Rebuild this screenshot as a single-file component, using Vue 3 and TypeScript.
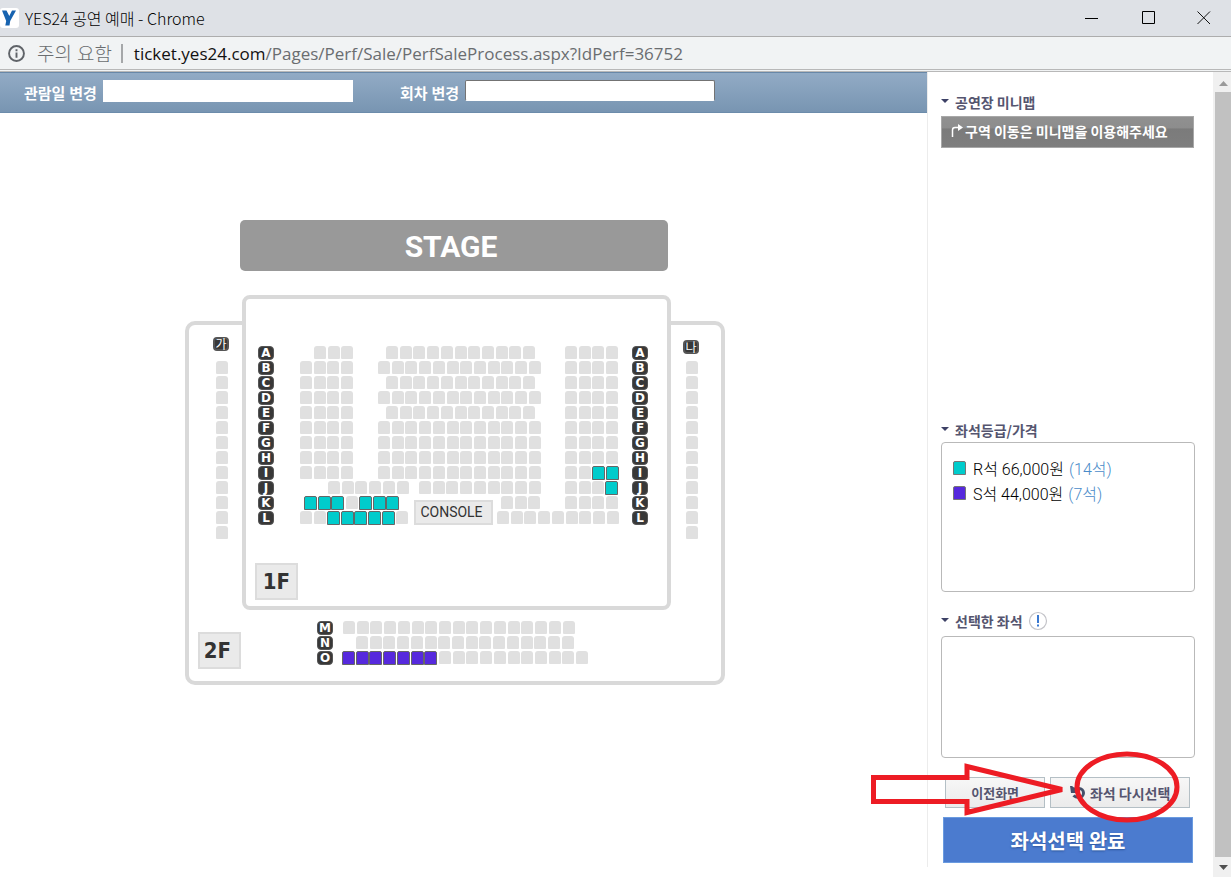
<script setup lang="ts">
import { ref } from 'vue'

type Grade = 'R' | 'S' | null

interface Seat {
  id: string
  x: number
  y: number
  grade: Grade
}

interface Marker {
  text: string
  x: number
  y: number
}

const SEAT_PITCH = 13.72
const ROW_PITCH = 15
const ORIGIN_X = 185
const ORIGIN_Y = 220

const seats: Seat[] = []
const markers: Marker[] = []

function addRun(row: string, x: number, y: number, count: number, grade: Grade = null) {
  for (let i = 0; i < count; i++) {
    const left = Math.round(x + i * SEAT_PITCH) - ORIGIN_X
    seats.push({ id: `${row}-${left}`, x: left, y: y - ORIGIN_Y, grade })
  }
}

'ABCDEFGHIJKL'.split('').forEach((row, i) => {
  const y = 346 + i * ROW_PITCH
  markers.push({ text: row, x: 258 - ORIGIN_X, y: y - ORIGIN_Y })
  markers.push({ text: row, x: 632 - ORIGIN_X, y: y - ORIGIN_Y })

  if (row === 'A') addRun(row, 314, y, 3)
  else if (i <= 8) addRun(row, 300, y, 4)

  if (row === 'A' || row === 'C' || row === 'E') addRun(row, 386, y, 11)
  else if (i <= 8) addRun(row, 378, y, 12)

  if (i <= 7 || row === 'K') addRun(row, 565, y, 4)
})

addRun('I', 565, 466, 2)
addRun('I', 592, 466, 2, 'R')
addRun('J', 328, 481, 6)
addRun('J', 419, 481, 9)
addRun('J', 565, 481, 3)
addRun('J', 605, 481, 1, 'R')
addRun('K', 304, 496, 3, 'R')
addRun('K', 346, 496, 1)
addRun('K', 359, 496, 3, 'R')
addRun('K', 501, 496, 3)
addRun('L', 300, 511, 2)
addRun('L', 327, 511, 5, 'R')
addRun('L', 396, 511, 1)
addRun('L', 497, 511, 9)

for (let i = 0; i < 12; i++) {
  addRun(`left${i}`, 216, 361 + i * ROW_PITCH, 1)
  addRun(`right${i}`, 686, 361 + i * ROW_PITCH, 1)
}

'MNO'.split('').forEach((row, i) => {
  markers.push({ text: row, x: 317 - ORIGIN_X, y: 621 + i * ROW_PITCH - ORIGIN_Y })
})
addRun('M', 343, 621, 17)
addRun('N', 356, 636, 16)
addRun('O', 342, 651, 7, 'S')
addRun('O', 439, 651, 11)

const wings: Marker[] = [
  { text: '가', x: 213 - ORIGIN_X, y: 337 - ORIGIN_Y },
  { text: '나', x: 683 - ORIGIN_X, y: 340 - ORIGIN_Y },
]

const prices = [
  { grade: 'R', price: '66,000', left: 14 },
  { grade: 'S', price: '44,000', left: 7 },
]

const picked = ref<string[]>([])

function toggle(id: string) {
  picked.value = picked.value.includes(id)
    ? picked.value.filter((p) => p !== id)
    : [...picked.value, id]
}
</script>

<template>
  <div class="window">
    <header class="titlebar">
      <svg class="favicon" viewBox="0 0 19 20" aria-hidden="true">
        <rect width="19" height="20" rx="3" fill="#fff" />
        <path d="M2 2.500h4.500l2.800 5.500 2.700-5.500h4l-5.800 10.500-.7 4.500H5.300l.9-4.500z" fill="#1763b0" />
      </svg>
      <h1 class="title">YES24 공연 예매 - Chrome</h1>
      <div class="controls">
        <button type="button" aria-label="최소화">
          <svg viewBox="0 0 14 14"><path d="M0 7.500h13" stroke="#000" fill="none" /></svg>
        </button>
        <button type="button" aria-label="최대화">
          <svg viewBox="0 0 14 14"><path d="M.5 .5h12v12H.5z" stroke="#000" fill="none" /></svg>
        </button>
        <button type="button" aria-label="닫기">
          <svg viewBox="0 0 14 14"><path d="M.5 .5l12.500 12.500M13 .5L.5 13" stroke="#111" fill="none" /></svg>
        </button>
      </div>
    </header>

    <div class="address">
      <svg class="info" viewBox="0 0 16 16" aria-hidden="true">
        <circle cx="8" cy="8" r="7" fill="none" stroke="#5f6368" stroke-width="1.800" />
        <path d="M8 7v5M8 4v1.800" stroke="#5f6368" stroke-width="1.800" />
      </svg>
      <span class="warn">주의 요함</span>
      <span class="divider"></span>
      <span class="url"><b>ticket.yes24.com</b>/Pages/Perf/Sale/PerfSaleProcess.aspx?IdPerf=36752</span>
    </div>

    <div class="page">
      <main class="booking">
        <form class="filters">
          <div class="filter">
            <label for="date">관람일 변경</label>
            <select id="date"><option></option></select>
          </div>
          <div class="filter">
            <label for="round">회차 변경</label>
            <select id="round" class="outlined"><option></option></select>
          </div>
        </form>

        <div class="hall">
          <div class="map">
            <div class="stage">STAGE</div>
            <div class="floor second"></div>
            <div class="floor first"></div>
            <span
              v-for="(m, i) in markers"
              :key="i"
              class="marker"
              :style="{ left: m.x + 'px', top: m.y + 'px' }"
            >{{ m.text }}</span>
            <span
              v-for="w in wings"
              :key="w.text"
              class="marker wing"
              :style="{ left: w.x + 'px', top: w.y + 'px' }"
            >{{ w.text }}</span>
            <template v-for="s in seats" :key="s.id">
              <button
                v-if="s.grade"
                type="button"
                class="seat open"
                :class="s.grade"
                :aria-label="`${s.grade}석`"
                :aria-pressed="picked.includes(s.id)"
                :style="{ left: s.x + 'px', top: s.y + 'px' }"
                @click="toggle(s.id)"
              ></button>
              <span v-else class="seat" :style="{ left: s.x + 'px', top: s.y + 'px' }"></span>
            </template>
            <span class="plate console">CONSOLE</span>
            <span class="plate f1">1F</span>
            <span class="plate f2">2F</span>
          </div>
        </div>
      </main>

      <aside class="side">
        <h2>공연장 미니맵</h2>
        <p class="banner">
          <svg viewBox="0 0 12 14" aria-hidden="true">
            <path d="M1.500 13V6q0-2.500 2.500-2.500h3" fill="none" stroke="#fff" stroke-width="1.500" />
            <path d="M7 0l5 3.500L7 7z" fill="#fff" />
          </svg>
          구역 이동은 미니맵을 이용해주세요
        </p>
        <div class="minimap"></div>

        <h2>좌석등급/가격</h2>
        <ul class="box prices">
          <li v-for="p in prices" :key="p.grade">
            <i class="chip" :class="p.grade"></i>
            <span>{{ p.grade }}석 {{ p.price }}원</span>
            <em>({{ p.left }}석)</em>
          </li>
        </ul>

        <h2 class="chosen">선택한 좌석
          <svg viewBox="0 0 20 20" aria-hidden="true">
            <circle cx="10" cy="10" r="8.500" fill="#fff" stroke="#c3c3c8" stroke-width="1.200" />
            <path d="M10 4v8M10 13.500v2" stroke="#3a78d0" stroke-width="2" />
          </svg>
        </h2>
        <div class="box selection"></div>

        <div class="actions">
          <button type="button" class="prev">이전화면</button>
          <button type="button" class="again">
            <svg viewBox="0 0 16 16" aria-hidden="true">
              <path d="M6 3.500h3a4.500 4.500 0 0 1 0 9q-3.500 0-5.500-2" fill="none" stroke="#44506a" stroke-width="3" />
              <path d="M0 1h2l2 1.500 3-.5v6H1z" fill="#44506a" />
            </svg>
            좌석 다시선택
          </button>
          <svg class="callout" viewBox="0 0 320 84" aria-hidden="true">
            <path
              d="M8.500 32.500h93.500v-11l95 23-95 23v-11H8.500z"
              fill="none" stroke="#ed1c24" stroke-width="5" stroke-linejoin="miter" stroke-miterlimit="2"
            />
            <ellipse cx="262" cy="42" rx="50" ry="33" fill="none" stroke="#ed1c24" stroke-width="5" />
          </svg>
        </div>
        <button type="button" class="submit">좌석선택 완료</button>
      </aside>

      <div class="scrollbar" aria-hidden="true">
        <svg viewBox="0 0 16 20"><path d="M4 14l4.500-5 4.500 5z" fill="#9a9a9a" /></svg>
        <div class="thumb"></div>
        <svg viewBox="0 0 16 20"><path d="M4 8h9l-4.500 5z" fill="#505050" /></svg>
      </div>
    </div>
  </div>
</template>

<style>
body {
  margin: 0;
  background: #fff;
}
</style>

<style scoped>
.window {
  display: flex;
  flex-direction: column;
  min-height: 100vh;
  font-family: "Open Sans", "Noto Sans CJK KR", sans-serif;
  color: #000;
}
.window *,
.window {
  box-sizing: border-box;
}
button {
  padding: 0;
  font-family: inherit;
  cursor: pointer;
}

.titlebar {
  display: flex;
  align-items: center;
  height: 37px;
  background: #dee1e6;
  border-bottom: 1px solid #adadad;
}
.favicon {
  width: 19px;
  height: 20px;
  margin-right: 6px;
}
.title {
  flex: 1;
  margin: 0;
  font-family: "Noto Sans CJK KR", sans-serif;
  font-size: 16px;
  line-height: 22px;
  font-weight: 300;
}
.controls {
  display: flex;
}
.controls button {
  display: flex;
  align-items: center;
  justify-content: center;
  width: 57px;
  height: 36px;
  border: 0;
  background: none;
}
.controls button:last-child {
  width: 54px;
}
.controls svg {
  width: 14px;
  height: 14px;
}

.address {
  display: flex;
  align-items: center;
  height: 35px;
  padding: 0 8px;
  background: #f1f3f4;
  border-bottom: 3px double #b8b8b8;
  color: #6a6d70;
}
.info {
  width: 17px;
  height: 17px;
  margin-right: 12px;
}
.warn {
  font-size: 19px;
  font-weight: 300;
}
.divider {
  width: 2px;
  height: 19px;
  margin: 0 11px 0 9px;
  background: #a5a7a9;
}
.url {
  font-size: 17px;
}
.url b {
  font-weight: 400;
  color: #111;
}

.page {
  flex: 1;
  display: grid;
  grid-template-columns: minmax(0, 1fr) 286px 18px;
}
.booking {
  display: flex;
  flex-direction: column;
}
.filters {
  display: flex;
  gap: 47px;
  height: 41px;
  padding: 7px 24px;
  background: linear-gradient(#92abc5, #7895b2);
  border-top: 1px solid #6888a8;
  border-bottom: 1px solid #6c8cab;
}
.filter {
  display: flex;
  align-items: flex-start;
  gap: 6px;
}
.filter label {
  font-size: 15px;
  line-height: 26px;
  font-weight: 700;
  color: #fff;
}
.filter select {
  appearance: none;
  width: 250px;
  height: 22px;
  border: 0;
  border-radius: 0;
  background: #fff;
}
.filter .outlined {
  height: 21px;
  border: 1px solid #737373;
  border-bottom-color: #fff;
  border-radius: 2px;
}

.hall {
  flex: 1;
  display: flex;
  justify-content: center;
  padding: 107px 17px 60px 0;
}
.map {
  position: relative;
  width: 540px;
  height: 465px;
}
.stage {
  position: absolute;
  left: 55px;
  top: 0;
  width: 428px;
  height: 51px;
  padding-right: 6px;
  border-radius: 5px;
  background: #999;
  color: #fff;
  font: 700 30px/54px Roboto, sans-serif;
  text-align: center;
}
.floor {
  position: absolute;
  border: 4px solid #d9d9d9;
  background: #fff;
}
.second {
  left: 0;
  top: 101px;
  width: 540px;
  height: 364px;
  border-radius: 10px;
}
.first {
  left: 57px;
  top: 75px;
  width: 429px;
  height: 315px;
  border-radius: 8px;
}
.marker {
  position: absolute;
  width: 16px;
  height: 14px;
  border: 1px solid #555;
  border-radius: 4px;
  background: #383838;
  color: #fff;
  font: 700 12px/13px "DejaVu Sans", sans-serif;
  text-align: center;
}
.wing {
  border-width: 2px;
  font: 400 12px/10px "Noto Sans CJK KR", sans-serif;
}
.seat {
  position: absolute;
  width: 12px;
  height: 13px;
  border-radius: 3px 3px 1px 1px;
  background: #e0e0e0;
}
.seat.open {
  width: 13px;
  height: 14px;
  border: 1px solid #666;
  border-radius: 2px 2px 0 0;
}
.seat.R,
.chip.R {
  background: #00cccc;
}
.seat.S,
.chip.S {
  background: #5629dd;
}
.plate {
  position: absolute;
  border: 2px solid #dcdcdc;
  background: #eaeaea;
  color: #333;
  text-align: center;
}
.console {
  left: 229px;
  top: 280px;
  width: 79px;
  height: 25px;
  padding-right: 4px;
  font: 400 14px/21px Roboto, sans-serif;
}
.f1,
.f2 {
  width: 43px;
  height: 37px;
  font: 700 22px/34px "DejaVu Sans Condensed", "DejaVu Sans", sans-serif;
}
.f1 {
  left: 70px;
  top: 343px;
}
.f2 {
  left: 13px;
  top: 412px;
  padding-right: 4px;
}

.side {
  display: flex;
  flex-direction: column;
  margin-bottom: 12px;
  padding: 20px 18px 4px 13px;
  border-left: 1px solid #ececec;
  font-family: "Noto Sans CJK KR", sans-serif;
}
h2 {
  display: flex;
  align-items: center;
  height: 20px;
  margin: 0;
  font-size: 14px;
  line-height: 20px;
  font-weight: 700;
  color: #55556f;
}
h2::before {
  content: "";
  margin: 0 6px 2px 0;
  border: 4px solid transparent;
  border-top-color: #3d4166;
  border-bottom: 0;
}
.chosen svg {
  width: 20px;
  height: 20px;
  margin-left: 5px;
}
.banner {
  display: flex;
  align-items: center;
  gap: 2px;
  height: 32px;
  margin: 4px 1px 0 0;
  padding: 0 0 2px 9px;
  border: 1px solid #a8a8a8;
  background: linear-gradient(#909090 0, #8d8d8d 36%, #7b7b7b 40%, #7e7e7e);
  font-size: 14px;
  font-weight: 700;
  color: #fff;
}
.banner svg {
  width: 12px;
  height: 14px;
}
.minimap {
  height: 272px;
}
.box {
  margin: 2px 0 19px;
  border: 1px solid #b9b9b9;
  border-radius: 4px;
  background: #fff;
}
.prices {
  height: 150px;
  padding: 12px 11px;
  list-style: none;
  font-family: Roboto, "Noto Sans CJK KR", sans-serif;
  font-size: 16px;
  font-weight: 300;
}
.prices li {
  display: flex;
  align-items: center;
  height: 25px;
}
.chip {
  width: 13px;
  height: 14px;
  margin-right: 7px;
  border: 1px solid #777;
  border-radius: 2px 2px 0 0;
}
.prices em {
  margin-left: 5px;
  font-style: normal;
  color: #4a8bc9;
}
.selection {
  height: 122px;
  margin-top: 5px;
}
.actions {
  position: relative;
  display: flex;
  gap: 5px;
  padding: 0 5px 0 4px;
}
.actions button {
  display: flex;
  align-items: center;
  justify-content: center;
  height: 31px;
  border: 1px solid #b4bfc5;
  background: linear-gradient(#f7f7f7, #ebebeb);
  font-size: 14px;
  font-weight: 700;
  color: #55556f;
}
.actions .prev {
  flex: 5;
  font-size: 13px;
}
.actions .again {
  flex: 7;
  gap: 4px;
}
.again svg {
  width: 16px;
  height: 16px;
}
.callout {
  position: absolute;
  left: -76px;
  top: -32px;
  width: 320px;
  height: 84px;
  pointer-events: none;
}
.submit {
  height: 46px;
  margin: 9px 2px 0;
  border: 1px solid #6a9be0;
  background: #4b7bcf;
  color: #fff;
  font-size: 20px;
  font-weight: 700;
  text-shadow: 0 1px 2px #2c559c;
}

.scrollbar {
  display: flex;
  flex-direction: column;
  padding-left: 2px;
  margin-bottom: 2px;
  background: #f0f0f0;
}
.scrollbar svg {
  width: 16px;
  height: 20px;
}
.thumb {
  flex: 1;
  background: #c1c1c1;
}
</style>
